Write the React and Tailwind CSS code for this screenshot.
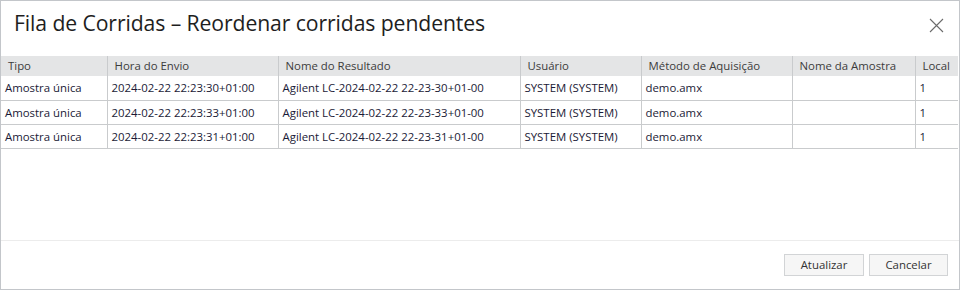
import React from 'react';

const columns = [
  { key: 'tipo', label: 'Tipo', width: 106 },
  { key: 'hora', label: 'Hora do Envio', width: 171 },
  { key: 'nome', label: 'Nome do Resultado', width: 242 },
  { key: 'usuario', label: 'Usuário', width: 121 },
  { key: 'metodo', label: 'Método de Aquisição', width: 151 },
  { key: 'amostra', label: 'Nome da Amostra', width: 123 },
  { key: 'local', label: 'Local', width: 43 },
];

const rows = [
  {
    tipo: 'Amostra única',
    hora: '2024-02-22 22:23:30+01:00',
    nome: 'Agilent LC-2024-02-22 22-23-30+01-00',
    usuario: 'SYSTEM (SYSTEM)',
    metodo: 'demo.amx',
    amostra: '',
    local: '1',
  },
  {
    tipo: 'Amostra única',
    hora: '2024-02-22 22:23:33+01:00',
    nome: 'Agilent LC-2024-02-22 22-23-33+01-00',
    usuario: 'SYSTEM (SYSTEM)',
    metodo: 'demo.amx',
    amostra: '',
    local: '1',
  },
  {
    tipo: 'Amostra única',
    hora: '2024-02-22 22:23:31+01:00',
    nome: 'Agilent LC-2024-02-22 22-23-31+01-00',
    usuario: 'SYSTEM (SYSTEM)',
    metodo: 'demo.amx',
    amostra: '',
    local: '1',
  },
];

const RunQueueDialog = () => {
  return (
    <div className="w-[960px] h-[290px] bg-white border border-[#c3c6ca] flex flex-col font-['Open_Sans',sans-serif] overflow-hidden">
      {/* title bar */}
      <div className="h-[55px] flex items-start justify-between pl-[13px] pr-[15px]">
        <h1 className="mt-[8px] text-[21.2px] leading-[28px] text-[#1e1e1e] tracking-[-0.1px]">
          Fila de Corridas – Reordenar corridas pendentes
        </h1>
        <button type="button" className="mt-[17px] w-[15px] h-[15px] text-[#6b6b6b]">
          <svg viewBox="0 0 15 15" width="15" height="15" fill="none" stroke="currentColor" strokeWidth="1.1">
            <path d="M1 1 L14 14 M14 1 L1 14" />
          </svg>
        </button>
      </div>

      {/* grid */}
      <div className="flex-1">
        <table className="table-fixed border-collapse w-[957px] text-[11.4px]">
          <colgroup>
            {columns.map((c) => (
              <col key={c.key} style={{ width: c.width }} />
            ))}
          </colgroup>
          <thead>
            <tr className="h-[20px] bg-[#e4e5e6]">
              {columns.map((c) => (
                <th
                  key={c.key}
                  className="border-r border-[#c9cbcd] last:border-r-0 px-[7px] text-left font-normal text-[#3c3c3c] whitespace-nowrap leading-[20px]"
                >
                  {c.label}
                </th>
              ))}
            </tr>
          </thead>
          <tbody>
            {rows.map((r, i) => (
              <tr key={i} className="h-[24px] border-b border-[#c9cbcd]">
                {columns.map((c) => (
                  <td
                    key={c.key}
                    className="border-r border-[#c9cbcd] last:border-r-0 px-[4px] text-[#1a1a36] whitespace-nowrap leading-[23px]"
                  >
                    {r[c.key]}
                  </td>
                ))}
              </tr>
            ))}
          </tbody>
        </table>
      </div>

      {/* footer */}
      <div className="h-[49px] border-t border-[#ececec] flex items-start justify-end gap-[5px] pt-[13px] pr-[11px]">
        <button
          type="button"
          className="w-[80px] h-[22px] bg-[#f6f6f6] border border-[#d2d4d6] text-[11.4px] text-[#333] leading-[20px]"
        >
          Atualizar
        </button>
        <button
          type="button"
          className="w-[79px] h-[22px] bg-[#f6f6f6] border border-[#d2d4d6] text-[11.4px] text-[#333] leading-[20px]"
        >
          Cancelar
        </button>
      </div>
    </div>
  );
};

export default RunQueueDialog;
